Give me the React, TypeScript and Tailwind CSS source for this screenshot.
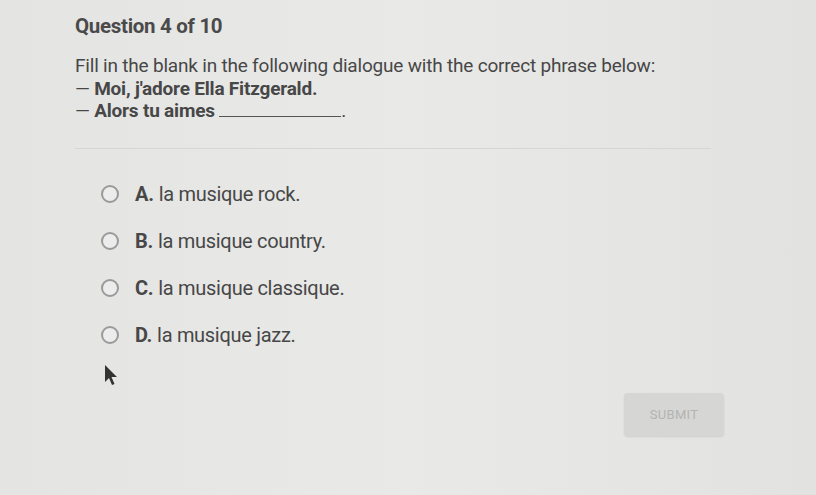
import React from 'react'

const options = [
  { letter: 'A.', text: 'la musique rock.' },
  { letter: 'B.', text: 'la musique country.' },
  { letter: 'C.', text: 'la musique classique.' },
  { letter: 'D.', text: 'la musique jazz.' },
]

const Cursor = () => (
  <svg width="16" height="22" viewBox="0 0 16 22" className="absolute left-[103px] top-[364px]">
    <path d="M2 1 L2 18 L6 14 L9 21 L11.5 20 L8.5 13 L14 13 Z" fill="#333" />
  </svg>
)

export default function App() {
  return (
    <div
      className="relative w-full h-[495px] overflow-hidden bg-gradient-to-r from-[#e4e4e3] via-[#e9e9e8] to-[#e2e2e0] text-[#474747]"
      style={{ fontFamily: 'Roboto, "Liberation Sans", sans-serif' }}
    >
      <div className="w-[636px] ml-[75px] pt-[14px]">
        {/* header */}
        <h1 className="text-[20.5px] font-bold leading-6 tracking-[-0.3px] text-[#4a4a4a]">Question 4 of 10</h1>

        {/* prompt */}
        <div className="mt-[17px] text-[19px] leading-[22.5px] tracking-[-0.2px]">
          <p>Fill in the blank in the following dialogue with the correct phrase below:</p>
          <p className="font-bold">
            <span className="font-normal">— </span>Moi, j'adore Ella Fitzgerald.
          </p>
          <p className="font-bold">
            <span className="font-normal">— </span>Alors tu aimes{' '}
            <span className="inline-block w-[122px] border-b border-[#555] align-baseline" />
            <span className="font-normal">.</span>
          </p>
        </div>

        {/* divider */}
        <div className="mt-[25px] h-px bg-[#d6d6d5]" />

        {/* options */}
        <div className="mt-[35px] flex flex-col gap-[26px] pl-[26px]">
          {options.map((o) => (
            <label key={o.letter} className="flex items-center h-[21px] text-[20px] tracking-[-0.3px]">
              <span className="w-[18px] h-[18px] rounded-full border-2 border-[#9a9a9a] bg-[#ececec]" />
              <span className="ml-[16px] font-bold">{o.letter}</span>
              <span className="ml-[5px]">{o.text}</span>
            </label>
          ))}
        </div>
      </div>

      <Cursor />

      {/* submit */}
      <button className="absolute left-[624px] top-[393px] w-[100px] h-[43px] rounded-sm bg-[#d6d6d5] text-[#b3b3b3] text-[13px] tracking-wide shadow-[0_1px_2px_rgba(0,0,0,0.1)]">
        SUBMIT
      </button>
    </div>
  )
}
